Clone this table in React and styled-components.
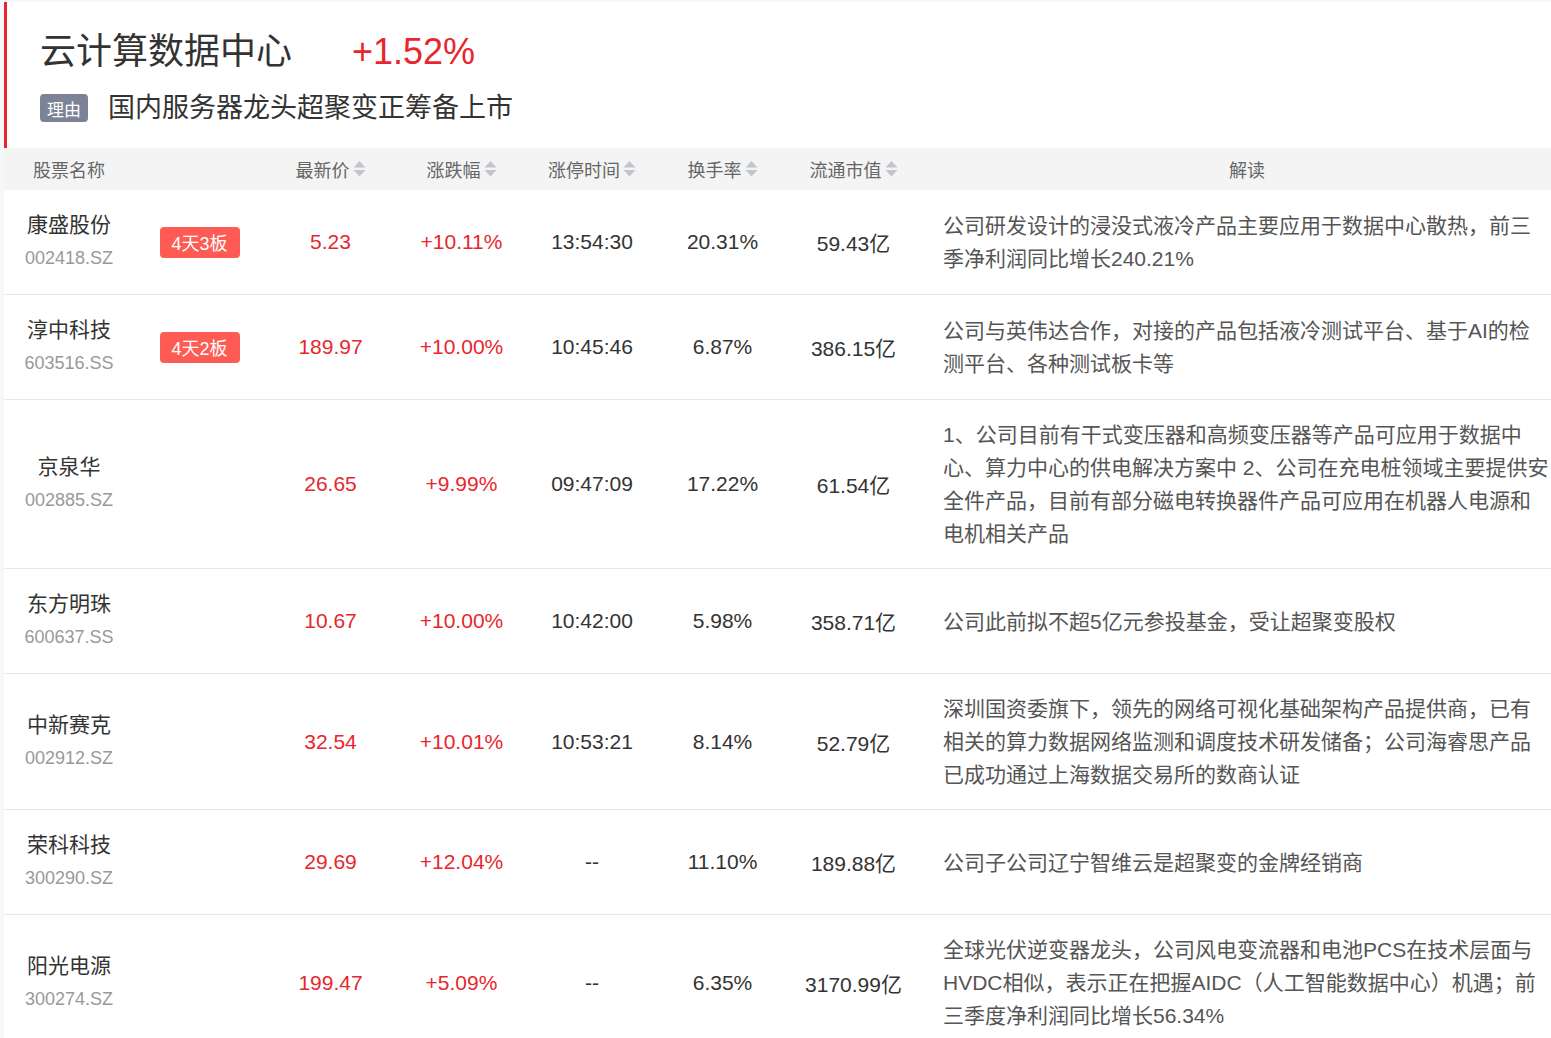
import React from 'react'
import styled, { createGlobalStyle } from 'styled-components'

const GlobalStyle = createGlobalStyle`
    html, body {
        margin: 0;
        padding: 0;
        background: #f6f7f9;
    }
    body {
        font-family: "Liberation Sans", "Noto Sans CJK SC", sans-serif;
        color: #333;
    }
`

const stocks = [
    {
        name: '康盛股份', code: '002418.SZ', tag: '4天3板', price: '5.23', change: '+10.11%',
        time: '13:54:30', turnover: '20.31%', cap: '59.43亿',
        note: '公司研发设计的浸没式液冷产品主要应用于数据中心散热，前三季净利润同比增长240.21%',
    },
    {
        name: '淳中科技', code: '603516.SS', tag: '4天2板', price: '189.97', change: '+10.00%',
        time: '10:45:46', turnover: '6.87%', cap: '386.15亿',
        note: '公司与英伟达合作，对接的产品包括液冷测试平台、基于AI的检测平台、各种测试板卡等',
    },
    {
        name: '京泉华', code: '002885.SZ', price: '26.65', change: '+9.99%',
        time: '09:47:09', turnover: '17.22%', cap: '61.54亿',
        note: '1、公司目前有干式变压器和高频变压器等产品可应用于数据中心、算力中心的供电解决方案中 2、公司在充电桩领域主要提供安全件产品，目前有部分磁电转换器件产品可应用在机器人电源和电机相关产品',
    },
    {
        name: '东方明珠', code: '600637.SS', price: '10.67', change: '+10.00%',
        time: '10:42:00', turnover: '5.98%', cap: '358.71亿',
        note: '公司此前拟不超5亿元参投基金，受让超聚变股权',
    },
    {
        name: '中新赛克', code: '002912.SZ', price: '32.54', change: '+10.01%',
        time: '10:53:21', turnover: '8.14%', cap: '52.79亿',
        note: '深圳国资委旗下，领先的网络可视化基础架构产品提供商，已有相关的算力数据网络监测和调度技术研发储备；公司海睿思产品已成功通过上海数据交易所的数商认证',
    },
    {
        name: '荣科科技', code: '300290.SZ', price: '29.69', change: '+12.04%',
        time: '--', turnover: '11.10%', cap: '189.88亿',
        note: '公司子公司辽宁智维云是超聚变的金牌经销商',
    },
    {
        name: '阳光电源', code: '300274.SZ', price: '199.47', change: '+5.09%',
        time: '--', turnover: '6.35%', cap: '3170.99亿',
        note: '全球光伏逆变器龙头，公司风电变流器和电池PCS在技术层面与HVDC相似，表示正在把握AIDC（人工智能数据中心）机遇；前三季度净利润同比增长56.34%',
    },
]

const sortable = ['最新价', '涨跌幅', '涨停时间', '换手率', '流通市值']

function SortIcon() {
    return (
        <svg width="13" height="18" viewBox="0 0 13 18">
            <path d="M0.5 7.5 L6.5 1 L12.5 7.5 Z" fill="#c2c5cc" />
            <path d="M0.5 10 L6.5 16.5 L12.5 10 Z" fill="#c2c5cc" />
        </svg>
    )
}

function App() {
    return (
        <Page>
            <GlobalStyle />
            <Card>
                <Header>
                    <TitleRow>
                        <Title>云计算数据中心</Title>
                        <Percent>+1.52%</Percent>
                    </TitleRow>
                    <ReasonRow>
                        <ReasonTag>理由</ReasonTag>
                        <ReasonText>国内服务器龙头超聚变正筹备上市</ReasonText>
                    </ReasonRow>
                </Header>

                <HeadRow>
                    <HeadCell>股票名称</HeadCell>
                    <HeadCell />
                    {sortable.map(label => (
                        <HeadCell key={label}>
                            {label}
                            <SortIcon />
                        </HeadCell>
                    ))}
                    <NoteHead>解读</NoteHead>
                </HeadRow>

                {stocks.map(s => (
                    <Row key={s.code}>
                        <NameCell>
                            <Name>{s.name}</Name>
                            <Code>{s.code}</Code>
                        </NameCell>
                        <Cell>{s.tag && <Badge>{s.tag}</Badge>}</Cell>
                        <Cell red>{s.price}</Cell>
                        <Cell red>{s.change}</Cell>
                        <Cell>{s.time}</Cell>
                        <Cell>{s.turnover}</Cell>
                        <Cell>{s.cap}</Cell>
                        <Note>{s.note}</Note>
                    </Row>
                ))}
            </Card>
        </Page>
    )
}

export default App

const Page = styled.div`
    padding: 2px 0 0 4px;
    min-height: 100vh;
    box-sizing: border-box;
`
const Card = styled.div`
    background: #fff;
`
const Header = styled.div`
    border-left: 3px solid #e8262d;
    padding: 26px 0 26px 33px;
`
const TitleRow = styled.div`
    display: flex;
    align-items: center;
    height: 48px;
`
const Title = styled.div`
    font-size: 36px;
    line-height: 48px;
    color: #333;
`
const Percent = styled.div`
    font-size: 36px;
    line-height: 48px;
    color: #e8262d;
    margin-left: 60px;
`
const ReasonRow = styled.div`
    display: flex;
    align-items: center;
    margin-top: 18px;
    height: 28px;
`
const ReasonTag = styled.div`
    width: 48px;
    height: 28px;
    border-radius: 4px;
    background: #7c8397;
    color: #fff;
    font-size: 17px;
    display: flex;
    align-items: center;
    justify-content: center;
`
const ReasonText = styled.div`
    margin-left: 20px;
    font-size: 27px;
    line-height: 28px;
    color: #333;
`
const columns = '130px 131px 131px 131px 130px 131px 131px 1fr'

const HeadRow = styled.div`
    display: grid;
    grid-template-columns: ${columns};
    height: 42px;
    background: #f4f4f4;
`
const HeadCell = styled.div`
    display: flex;
    align-items: center;
    justify-content: center;
    gap: 3px;
    font-size: 18px;
    color: #666;
`
const NoteHead = styled(HeadCell)`
    padding-left: 24px;
`
const Row = styled.div`
    display: grid;
    grid-template-columns: ${columns};
    box-sizing: border-box;
    min-height: 105px;
    padding: 18px 0;
    border-bottom: 1px solid #e8e8e8;
`
const Cell = styled.div`
    display: flex;
    align-items: center;
    justify-content: center;
    font-size: 21px;
    color: ${props => (props.red ? '#e8262d' : '#333')};
`
const NameCell = styled.div`
    display: flex;
    flex-direction: column;
    align-items: center;
    justify-content: center;
    padding-bottom: 5px;
`
const Name = styled.div`
    font-size: 21px;
    line-height: 32px;
    color: #333;
`
const Code = styled.div`
    margin-top: 5px;
    font-size: 18px;
    line-height: 24px;
    color: #999;
`
const Badge = styled.div`
    width: 80px;
    height: 31px;
    border-radius: 4px;
    background: #fd5b53;
    color: #fff;
    font-size: 18px;
    display: flex;
    align-items: center;
    justify-content: center;
`
const Note = styled.div`
    display: flex;
    align-items: center;
    padding: 0 2px 0 24px;
    font-size: 21px;
    line-height: 33px;
    color: #555;
`
